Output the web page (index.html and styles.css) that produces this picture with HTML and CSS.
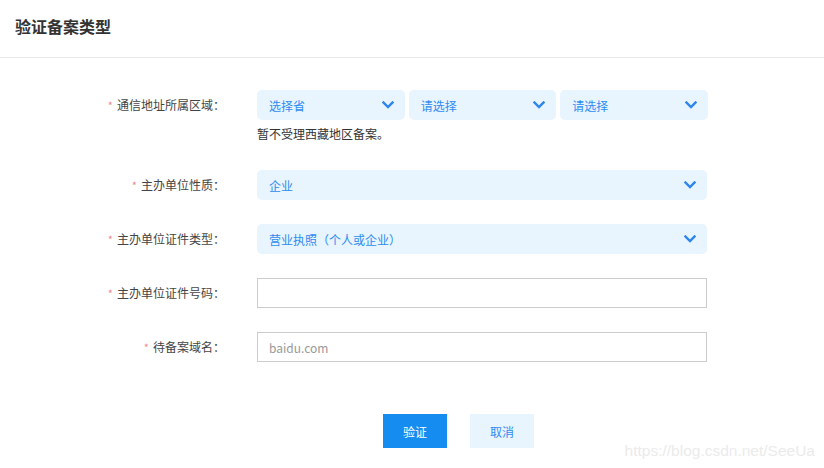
FILE: index.html
```html
<!DOCTYPE html>
<html lang="zh-CN">
<head>
<meta charset="utf-8">
<title>验证备案类型</title>
<link rel="stylesheet" href="styles.css">
</head>
<body>
<div class="page">
  <div class="header"><h1 class="title">验证备案类型</h1></div>
  <form class="form">
    <div class="row">
      <label class="label"><span class="req">*</span>通信地址所属区域：</label>
      <div class="field">
        <div class="select-group">
          <div class="select"><span>选择省</span><svg class="chev" viewBox="0 0 12 8"><path d="M1.5 1.5 L6 6 L10.5 1.5"/></svg></div>
          <div class="select"><span>请选择</span><svg class="chev" viewBox="0 0 12 8"><path d="M1.5 1.5 L6 6 L10.5 1.5"/></svg></div>
          <div class="select"><span>请选择</span><svg class="chev" viewBox="0 0 12 8"><path d="M1.5 1.5 L6 6 L10.5 1.5"/></svg></div>
        </div>
        <p class="hint">暂不受理西藏地区备案。</p>
      </div>
    </div>
    <div class="row">
      <label class="label"><span class="req">*</span>主办单位性质：</label>
      <div class="field">
        <div class="select"><span>企业</span><svg class="chev" viewBox="0 0 12 8"><path d="M1.5 1.5 L6 6 L10.5 1.5"/></svg></div>
      </div>
    </div>
    <div class="row">
      <label class="label"><span class="req">*</span>主办单位证件类型：</label>
      <div class="field">
        <div class="select"><span>营业执照（个人或企业）</span><svg class="chev" viewBox="0 0 12 8"><path d="M1.5 1.5 L6 6 L10.5 1.5"/></svg></div>
      </div>
    </div>
    <div class="row">
      <label class="label"><span class="req">*</span>主办单位证件号码：</label>
      <div class="field">
        <input class="input" type="text">
      </div>
    </div>
    <div class="row">
      <label class="label"><span class="req">*</span>待备案域名：</label>
      <div class="field">
        <input class="input" type="text" placeholder="baidu.com">
      </div>
    </div>
    <div class="row actions">
      <div></div>
      <div class="buttons">
        <button type="button" class="btn btn-primary">验证</button>
        <button type="button" class="btn btn-light">取消</button>
      </div>
    </div>
  </form>
  <div class="watermark">https://blog.csdn.net/SeeUa</div>
</div>
</body>
</html>
```
FILE: styles.css
```css
* { box-sizing: border-box; }
html, body { margin: 0; padding: 0; background: #fff; }
body {
  font-family: "Noto Sans CJK SC", "Noto Sans", "Liberation Sans", sans-serif;
  font-size: 12px;
  color: #333;
}
.page { position: relative; width: 824px; height: 468px; overflow: hidden; }
.header {
  height: 58px;
  padding: 15px 15px 0;
  border-bottom: 1px solid #e8e8e8;
}
.title {
  margin: 0;
  font-size: 16px;
  line-height: 22px;
  font-weight: bold;
  color: #333;
}
.form {
  display: flex;
  flex-direction: column;
  gap: 24px;
  padding-top: 32px;
}
.row {
  display: grid;
  grid-template-columns: 225px 450px;
  column-gap: 32px;
  align-items: start;
}
.label {
  text-align: right;
  line-height: 30px;
  color: #444;
  white-space: nowrap;
}
.req { color: #f08a96; margin-right: 4px; font-size: 11px; }
.field { display: flex; flex-direction: column; }
.select-group { display: flex; gap: 4px; width: 451px; }
.select-group .select { flex: 1; }
.select {
  height: 30px;
  background: #e8f4fe;
  border-radius: 5px;
  display: flex;
  align-items: center;
  justify-content: space-between;
  padding: 0 11px 0 12px;
  color: #2d8cf0;
}
.chev { width: 12px; height: 8px; fill: none; stroke: #2d86ee; stroke-width: 2.4; stroke-linecap: square; }
.hint { margin: 4px 0 2px; line-height: 20px; color: #333; }
.input {
  height: 30px;
  width: 100%;
  border: 1px solid #ccc;
  border-radius: 0;
  padding: 0 11px;
  font: inherit;
  color: #333;
  background: #fff;
  outline: none;
}
.input::placeholder { color: #999; }
.actions { margin-top: 28px; }
.buttons { display: flex; gap: 23px; padding-left: 126px; }
.btn {
  width: 64px;
  height: 34px;
  border: 0;
  border-radius: 0;
  font: inherit;
  font-size: 12px;
  cursor: pointer;
}
.btn-primary { background: #158cf0; color: #fff; }
.btn-light { background: #e8f4fe; color: #2d8cf0; }
.watermark {
  position: absolute;
  right: 9px;
  bottom: 8px;
  font-family: "Liberation Sans", Arial, sans-serif;
  font-size: 15.5px;
  color: #ebebeb;
}
```
